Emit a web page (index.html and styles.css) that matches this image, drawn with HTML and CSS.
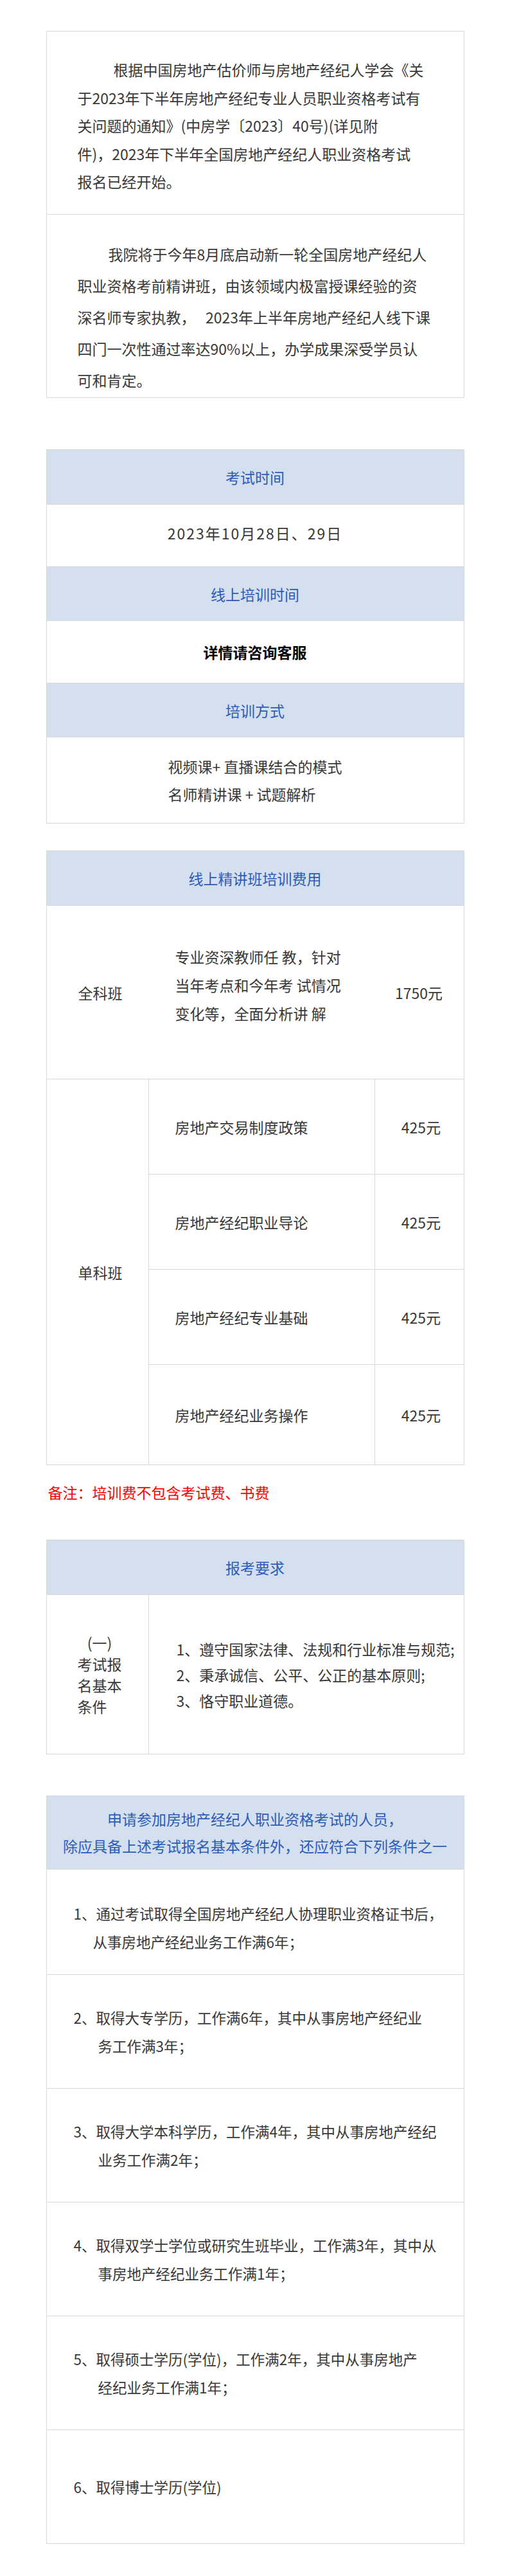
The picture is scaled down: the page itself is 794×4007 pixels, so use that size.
FILE: index.html
```html
<!DOCTYPE html>
<html lang="zh-CN">
<head>
  <meta charset="UTF-8">
  <meta name="viewport" content="width=device-width, initial-scale=1.0">
  <title>房地产经纪人职业资格考前精讲班</title>
  <link rel="stylesheet" href="styles.css">
</head>
<body>
<div class="page">

  <!-- 开班说明 -->
  <div class="box intro">
    <div class="intro-cell first">
      <p>根据中国房地产估价师与房地产经纪人学会《关<br>于2023年下半年房地产经纪专业人员职业资格考试有<br>关问题的通知》(中房学〔2023〕40号)(详见附<br>件)，2023年下半年全国房地产经纪人职业资格考试<br>报名已经开始。</p>
    </div>
    <div class="intro-cell second">
      <p>我院将于今年8月底启动新一轮全国房地产经纪人<br>职业资格考前精讲班，由该领域内极富授课经验的资<br>深名师专家执教，&nbsp;&nbsp; 2023年上半年房地产经纪人线下课<br>四门一次性通过率达90%以上，办学成果深受学员认<br>可和肯定。</p>
    </div>
  </div>

  <!-- 时间与方式 -->
  <div class="box schedule">
    <div class="head">考试时间</div>
    <div class="row date">2023年10月28日、29日</div>
    <div class="head">线上培训时间</div>
    <div class="row strong">详情请咨询客服</div>
    <div class="head">培训方式</div>
    <div class="row method">
      <div class="method-text">视频课+ 直播课结合的模式<br>名师精讲课 + 试题解析</div>
    </div>
  </div>

  <!-- 费用 -->
  <div class="box fees">
    <div class="head">线上精讲班培训费用</div>
    <div class="fee-full">
      <div class="fee-name">全科班</div>
      <div class="fee-desc">专业资深教师任 教，针对<br>当年考点和今年考 试情况<br>变化等，全面分析讲 解</div>
      <div class="fee-price">1750元</div>
    </div>
    <div class="fee-single">
      <div class="fee-name span">单科班</div>
      <div class="fee-subject">房地产交易制度政策</div>
      <div class="fee-price line">425元</div>
      <div class="fee-subject top">房地产经纪职业导论</div>
      <div class="fee-price line top">425元</div>
      <div class="fee-subject top">房地产经纪专业基础</div>
      <div class="fee-price line top">425元</div>
      <div class="fee-subject top">房地产经纪业务操作</div>
      <div class="fee-price line top">425元</div>
    </div>
  </div>

  <p class="note">备注：培训费不包含考试费、书费</p>

  <!-- 报考要求 -->
  <div class="box require">
    <div class="head">报考要求</div>
    <div class="req-row">
      <div class="req-name">
        <div class="req-name-text"><span class="req-no">(一)</span>考试报<br>名基本<br>条件</div>
      </div>
      <div class="req-list">1、遵守国家法律、法规和行业标准与规范;<br>2、秉承诚信、公平、公正的基本原则;<br>3、恪守职业道德。</div>
    </div>
  </div>

  <!-- 报考条件 -->
  <div class="box conditions">
    <div class="head two">申请参加房地产经纪人职业资格考试的人员，<br>除应具备上述考试报名基本条件外，还应符合下列条件之一</div>
    <div class="cond first"><p>1、通过考试取得全国房地产经纪人协理职业资格证书后，<br>从事房地产经纪业务工作满6年；</p></div>
    <div class="cond"><p>2、取得大专学历，工作满6年，其中从事房地产经纪业<br>务工作满3年；</p></div>
    <div class="cond"><p>3、取得大学本科学历，工作满4年，其中从事房地产经纪<br>业务工作满2年；</p></div>
    <div class="cond"><p>4、取得双学士学位或研究生班毕业，工作满3年，其中从<br>事房地产经纪业务工作满1年；</p></div>
    <div class="cond"><p>5、取得硕士学历(学位)，工作满2年，其中从事房地产<br>经纪业务工作满1年；</p></div>
    <div class="cond"><p>6、取得博士学历(学位)</p></div>
  </div>

</div>
</body>
</html>
```

FILE: styles.css
```css
body {
  margin: 0;
  background: #fff;
  font-family: "Noto Sans CJK SC", "Noto Sans", sans-serif;
  font-size: 23px;
  color: #383838;
}

.page {
  padding: 48px 0 50px;
}

.box {
  width: 651px;
  margin: 0 auto;
  border: 1px solid #d9d9d9;
  box-sizing: border-box;
}

.box > * {
  box-sizing: border-box;
}

.box > * + * {
  border-top: 1px solid #d9d9d9;
}

.head {
  height: 84px;
  display: flex;
  align-items: center;
  justify-content: center;
  text-align: center;
  background: #d4dff0;
  color: #2c5cb8;
}

/* 开班说明 */
.intro-cell {
  height: 285px;
  padding: 0 20px 0 48px;
  white-space: nowrap;
}

.intro-cell p {
  margin: 0;
}

.intro-cell.first {
  height: 284px;
  padding-top: 38px;
  line-height: 43.5px;
}

.intro-cell.first p {
  text-indent: 56px;
}

.intro-cell.second {
  padding-top: 37px;
  line-height: 49px;
}

.intro-cell.second p {
  text-indent: 48px;
}

.schedule {
  margin-top: 80px;
}

.row {
  display: flex;
  align-items: center;
  justify-content: center;
}

.row.date {
  height: 97px;
  padding-bottom: 8px;
  letter-spacing: 2px;
}

.row.strong {
  height: 97px;
  font-weight: 700;
  color: #000;
}

.row.method {
  height: 134px;
  line-height: 43px;
}

.method-text {
  text-align: left;
}

/* 费用 */
.fees {
  margin-top: 42px;
}

.fee-full,
.fee-single {
  display: grid;
  grid-template-columns: 158px 352px 1fr;
}

.fee-full {
  height: 270px;
}

.fee-single {
  height: 600px;
  grid-template-rows: 147px 148px 148px 156px;
}

.fee-single > div {
  box-sizing: border-box;
}

.fee-name {
  display: flex;
  align-items: center;
  padding-left: 49px;
}

.fee-name.span {
  grid-row: 1 / 5;
}

.fee-desc {
  display: flex;
  align-items: center;
  padding: 0 0 24px 42px;
  line-height: 44px;
  white-space: nowrap;
}

.fee-subject {
  display: flex;
  align-items: center;
  padding-left: 41px;
  border-left: 1px solid #d9d9d9;
}

.fee-price {
  display: flex;
  align-items: center;
  justify-content: center;
}

.fee-price.line {
  border-left: 1px solid #d9d9d9;
  padding-left: 6px;
}

.fee-single .top {
  border-top: 1px solid #d9d9d9;
}

.note {
  width: 651px;
  margin: 22px auto 54px;
  padding-left: 3px;
  box-sizing: border-box;
  line-height: 40px;
  color: #ff0000;
}

/* 报考要求 */
.req-row {
  height: 248px;
  display: grid;
  grid-template-columns: 158px 1fr;
}

.req-name {
  display: flex;
  align-items: center;
  padding-left: 48px;
}

.req-name-text {
  width: 69px;
  line-height: 33px;
}

.req-no {
  display: block;
  text-align: center;
}

.req-list {
  display: flex;
  align-items: center;
  padding-left: 43px;
  border-left: 1px solid #d9d9d9;
  line-height: 40px;
  white-space: nowrap;
}

/* 报考条件 */
.conditions {
  margin-top: 64px;
}

.head.two {
  height: 113px;
  line-height: 41.5px;
}

.cond {
  height: 177px;
  display: flex;
  align-items: center;
  font-size: 22.5px;
  line-height: 44px;
  white-space: nowrap;
}

.cond p {
  margin: 0;
  padding-left: 80px;
  text-indent: -38px;
}

.cond.first {
  height: 164px;
  padding-top: 17px;
}

.cond.first p {
  padding-left: 72px;
  text-indent: -30px;
}
```
